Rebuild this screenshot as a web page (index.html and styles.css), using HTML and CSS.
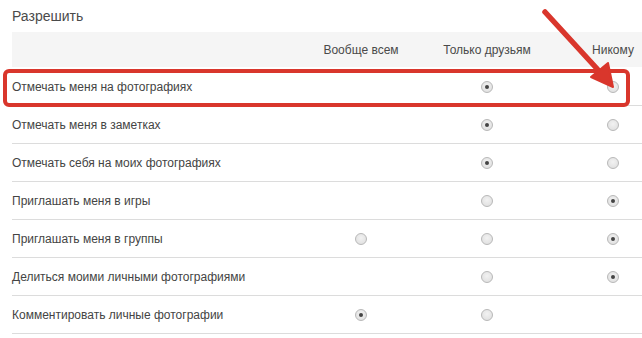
FILE: index.html
```html
<!DOCTYPE html>
<html>
<head>
<meta charset="utf-8">
<link rel="stylesheet" href="styles.css">
</head>
<body>
<div class="page">
  <h2 class="title">Разрешить</h2>
  <div class="table">
    <div class="head">
      <div class="cell label"></div>
      <div class="cell">Вообще всем</div>
      <div class="cell">Только друзьям</div>
      <div class="cell">Никому</div>
    </div>
    <div class="row">
      <div class="cell label">Отмечать меня на фотографиях</div>
      <div class="cell"></div>
      <div class="cell"><span class="radio on"></span></div>
      <div class="cell"><span class="radio"></span></div>
    </div>
    <div class="row">
      <div class="cell label">Отмечать меня в заметках</div>
      <div class="cell"></div>
      <div class="cell"><span class="radio on"></span></div>
      <div class="cell"><span class="radio"></span></div>
    </div>
    <div class="row">
      <div class="cell label">Отмечать себя на моих фотографиях</div>
      <div class="cell"></div>
      <div class="cell"><span class="radio on"></span></div>
      <div class="cell"><span class="radio"></span></div>
    </div>
    <div class="row">
      <div class="cell label">Приглашать меня в игры</div>
      <div class="cell"></div>
      <div class="cell"><span class="radio"></span></div>
      <div class="cell"><span class="radio on"></span></div>
    </div>
    <div class="row">
      <div class="cell label">Приглашать меня в группы</div>
      <div class="cell"><span class="radio"></span></div>
      <div class="cell"><span class="radio"></span></div>
      <div class="cell"><span class="radio on"></span></div>
    </div>
    <div class="row">
      <div class="cell label">Делиться моими личными фотографиями</div>
      <div class="cell"></div>
      <div class="cell"><span class="radio"></span></div>
      <div class="cell"><span class="radio on"></span></div>
    </div>
    <div class="row">
      <div class="cell label">Комментировать личные фотографии</div>
      <div class="cell"><span class="radio on"></span></div>
      <div class="cell"><span class="radio"></span></div>
      <div class="cell"></div>
    </div>
  </div>
  <div class="highlight"></div>
  <svg class="arrow" width="642" height="338" viewBox="0 0 642 338">
    <line x1="545" y1="12" x2="600" y2="72" stroke="#d9362c" stroke-width="5.5" stroke-linecap="round"/>
    <polygon points="613,87 591,77 608,63" fill="#d9362c" stroke="#d9362c" stroke-width="2" stroke-linejoin="round"/>
  </svg>
</div>
</body>
</html>
```

FILE: styles.css
```css
html, body {
  margin: 0;
  padding: 0;
  background: #fff;
  overflow: hidden;
}
body {
  width: 642px;
  height: 338px;
  font-family: "Liberation Sans", Arial, sans-serif;
  color: #444;
}
.page {
  position: relative;
  width: 642px;
  height: 338px;
  overflow: hidden;
}
.title {
  margin: 0;
  padding: 7px 0 0 12px;
  height: 25px;
  font-size: 14px;
  font-weight: normal;
  color: #4a4a4a;
  line-height: 18px;
}
.table {
  margin-left: 12px;
  width: 664px;
}
.head, .row {
  display: grid;
  grid-template-columns: 286px 126px 126px 126px;
}
.head {
  background: #f5f5f5;
  height: 35px;
  align-items: center;
  font-size: 12px;
  color: #4a4a4a;
  margin-bottom: 1px;
}
.head .cell {
  text-align: center;
  padding-top: 1px;
}
.row {
  height: 37px;
  border-bottom: 1px solid #dcdcdc;
  align-items: center;
  font-size: 12px;
}
.row .cell {
  display: flex;
  justify-content: center;
  align-items: center;
}
.row .cell.label {
  justify-content: flex-start;
  color: #444;
}
.radio {
  display: block;
  width: 10px;
  height: 10px;
  border-radius: 50%;
  border: 1px solid #b8b8b8;
  background: radial-gradient(circle at 50% 40%, #f2f2f2 0%, #dcdcdc 100%);
  position: relative;
}
.radio.on::after {
  content: "";
  position: absolute;
  left: 3px;
  top: 3px;
  width: 4px;
  height: 4px;
  border-radius: 50%;
  background: #444;
}
.highlight {
  position: absolute;
  left: 3px;
  top: 69px;
  width: 619px;
  height: 30px;
  border: 4px solid #d9362c;
  border-radius: 6px;
}
.arrow {
  position: absolute;
  left: 0;
  top: 0;
}
```
